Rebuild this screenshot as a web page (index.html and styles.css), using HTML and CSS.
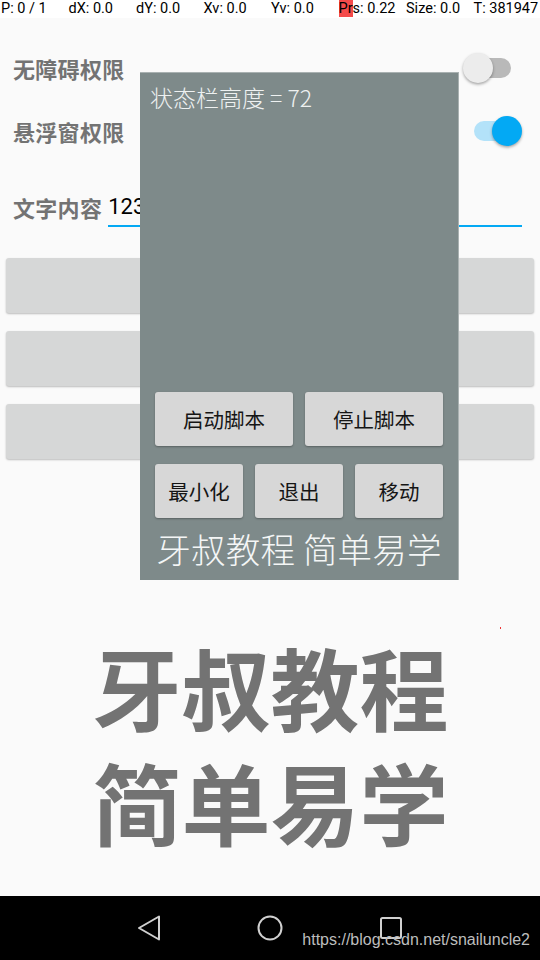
FILE: index.html
```html
<!DOCTYPE html>
<html lang="zh">
<head>
<meta charset="utf-8">
<link rel="stylesheet" href="styles.css">
</head>
<body>
<div class="screen">
  <div class="pointer-bar">
    <span>P: 0 / 1</span>
    <span>dX: 0.0</span>
    <span>dY: 0.0</span>
    <span>Xv: 0.0</span>
    <span>Yv: 0.0</span>
    <span><b class="hl">Pr</b>s: 0.22</span>
    <span>Size: 0.0</span>
    <span>T: 381947</span>
  </div>

  <div class="content">
    <div class="row switch-row">
      <span class="label">无障碍权限</span>
      <span class="switch off"><span class="track"></span><span class="thumb"></span></span>
    </div>
    <div class="row switch-row second">
      <span class="label">悬浮窗权限</span>
      <span class="switch on"><span class="track"></span><span class="thumb"></span></span>
    </div>
    <div class="row edit-row">
      <span class="label">文字内容</span>
      <span class="edit">123</span>
    </div>
    <div class="btns">
      <div class="btn-big"></div>
      <div class="btn-big"></div>
      <div class="btn-big"></div>
    </div>
    <div class="big-text">
      <div class="big-line">牙叔教程</div>
      <div class="big-line">简单易学</div>
    </div>
    <span class="dot"></span>
  </div>

  <div class="nav">
    <svg class="nav-ico" width="24" height="28" viewBox="0 0 24 28"><path d="M2 14 L22 2.5 L22 25.5 Z" fill="none" stroke="#d0d0d0" stroke-width="2" stroke-linejoin="round"/></svg>
    <svg class="nav-ico" width="26" height="26" viewBox="0 0 26 26"><circle cx="13" cy="13" r="11.5" fill="none" stroke="#d0d0d0" stroke-width="2"/></svg>
    <svg class="nav-ico" width="24" height="24" viewBox="0 0 24 24"><rect x="2" y="2" width="20" height="20" rx="1.5" fill="none" stroke="#d0d0d0" stroke-width="2"/></svg>
    <span class="watermark">https://blog.csdn.net/snailuncle2</span>
  </div>

  <div class="float-win">
    <div class="fw-title">状态栏高度 = 72</div>
    <div class="fw-bottom">
      <div class="fw-row two">
        <div class="fw-btn">启动脚本</div>
        <div class="fw-btn">停止脚本</div>
      </div>
      <div class="fw-row three">
        <div class="fw-btn">最小化</div>
        <div class="fw-btn">退出</div>
        <div class="fw-btn">移动</div>
      </div>
      <div class="fw-foot">牙叔教程 简单易学</div>
    </div>
  </div>
</div>
</body>
</html>
```

FILE: styles.css
```css
html, body {
  margin: 0;
  padding: 0;
  background: #fafafa;
}
.screen {
  position: relative;
  width: 540px;
  height: 960px;
  display: flex;
  flex-direction: column;
  overflow: hidden;
  font-family: "Noto Sans CJK SC", "Noto Sans", sans-serif;
}
.pointer-bar {
  height: 18px;
  display: grid;
  grid-template-columns: repeat(8, 67.5px);
  font-family: Roboto, "Liberation Sans", sans-serif;
  font-size: 14.5px;
  line-height: 18px;
  color: #000;
  background: #ffffff;
  white-space: nowrap;
}
.pointer-bar span { padding-left: 1px; }
.hl {
  font-weight: 400;
  background: #f44a4a;
}
.content {
  flex: 1;
  display: flex;
  flex-direction: column;
  padding: 26px 6px 0 6px;
  position: relative;
}
.row {
  display: flex;
  align-items: center;
  padding-left: 7px;
}
.switch-row {
  height: 48px;
  justify-content: space-between;
}
.switch-row.second { margin-top: 15px; }
.label {
  font-size: 22px;
  line-height: 30px;
  font-weight: 700;
  color: #737373;
  letter-spacing: 0.3px;
}
.switch {
  position: relative;
  width: 60px;
  height: 32px;
}
.switch .track {
  position: absolute;
  top: 6px;
  height: 20px;
  border-radius: 10px;
}
.switch .thumb {
  position: absolute;
  top: 1px;
  width: 30px;
  height: 30px;
  border-radius: 50%;
  box-shadow: 0 1.5px 3px rgba(0,0,0,0.35);
}
.switch.off { margin-right: 11px; }
.switch.off .track { left: 8px; width: 40px; background: #b9b9b9; }
.switch.off .thumb { left: 0; background: #ececec; }
.switch.on { margin-right: 6px; }
.switch.on .track { left: 6px; width: 44px; background: #b3e2f9; }
.switch.on .thumb { left: 24px; background: #03a9f4; }

.edit-row {
  margin-top: 37px;
  height: 44px;
  align-items: flex-start;
}
.edit {
  flex: 1;
  margin-left: 6px;
  margin-right: 12px;
  font-family: Roboto, sans-serif;
  font-size: 22px;
  line-height: 30px;
  color: #000;
  height: 33px;
  border-bottom: 2.5px solid #03a9f4;
}
.btns {
  margin-top: 22px;
  display: flex;
  flex-direction: column;
  gap: 18px;
}
.btn-big {
  height: 55px;
  background: #d6d7d7;
  border-radius: 3px;
  box-shadow: 0 1px 2px rgba(0,0,0,0.25);
}
.big-text {
  margin-top: 176px;
  display: flex;
  flex-direction: column;
  align-items: center;
  gap: 14px;
  font-size: 89px;
  line-height: 101px;
  font-weight: 700;
  color: #737373;
  margin-left: 1px;
}
.big-line {
  height: 101px;
}
.dot {
  position: absolute;
  left: 500px;
  top: 609px;
  width: 1px;
  height: 2px;
  background: #e33;
}
.nav {
  position: relative;
  height: 64px;
  background: #000;
  display: flex;
  align-items: center;
  justify-content: center;
  gap: 96px;
}
.nav-ico { display: block; }
.watermark {
  position: absolute;
  right: 10px;
  bottom: 11px;
  font-family: "Liberation Sans", Arial, sans-serif;
  font-size: 16px;
  color: #bdbdbd;
}
.float-win {
  position: absolute;
  left: 140px;
  top: 72px;
  width: 319px;
  height: 508px;
  box-sizing: border-box;
  background: #7e8a8a;
  border-top: 1px solid #a9b1b1;
  border-right: 1px solid #a9b1b1;
  display: flex;
  flex-direction: column;
  justify-content: space-between;
}
.fw-title {
  padding: 10px 0 0 10px;
  font-size: 23px;
  line-height: 28px;
  color: #eef1f1;
  font-weight: 300;
}
.fw-bottom {
  padding: 0 15px 0 15px;
  display: flex;
  flex-direction: column;
}
.fw-row {
  display: grid;
  gap: 12px;
}
.fw-row.two { grid-template-columns: 138px 138px; }
.fw-row.three { grid-template-columns: 88px 88px 88px; margin-top: 18px; }
.fw-btn {
  height: 54px;
  background: #d7d7d7;
  border-radius: 3px;
  box-shadow: 0 1px 2px rgba(0,0,0,0.3);
  display: flex;
  align-items: center;
  justify-content: center;
  font-size: 20.5px;
  color: #151515;
}
.fw-foot {
  margin-top: 8px;
  height: 54px;
  text-align: center;
  font-size: 34.5px;
  letter-spacing: 0.2px;
  line-height: 44px;
  color: #f4f6f6;
  font-weight: 300;
}
```
